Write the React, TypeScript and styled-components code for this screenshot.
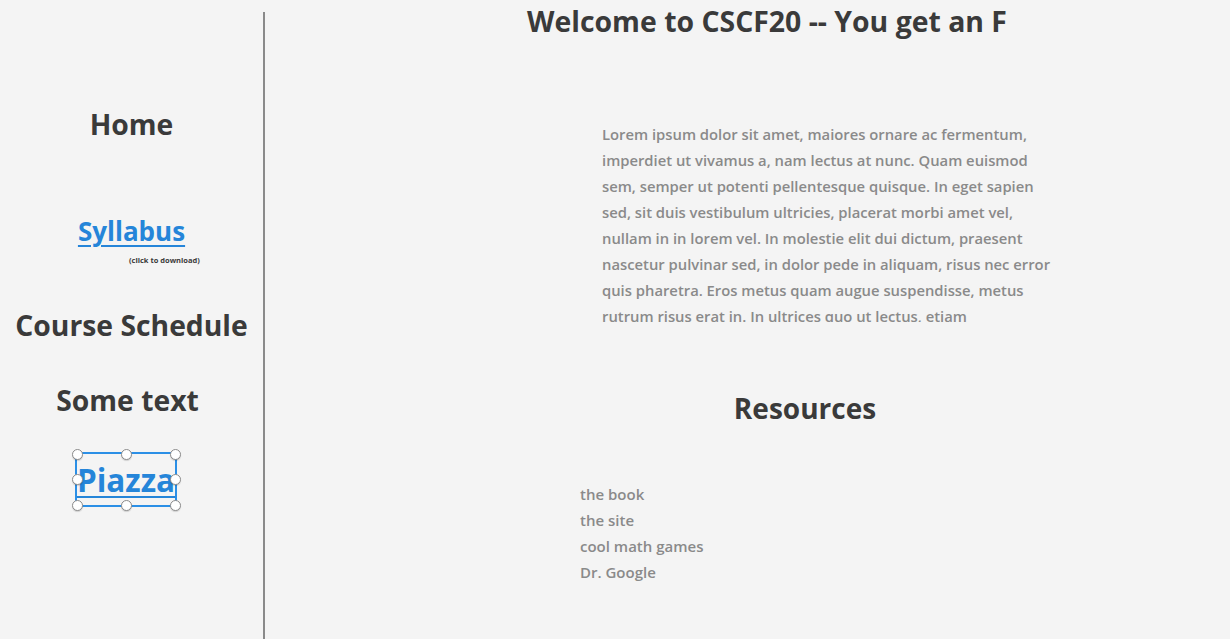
import React from "react";
import styled, { createGlobalStyle } from "styled-components";

const Global = createGlobalStyle`
  html, body { margin: 0; padding: 0; background: #f4f4f4; }
  body { font-family: "Open Sans", "Noto Sans", sans-serif; }
`;

const Page = styled.div`
  display: grid;
  grid-template-columns: 263px 2px 1fr;
  width: 1230px;
  height: 639px;
  overflow: hidden;
  background: #f4f4f4;
`;

const Sidebar = styled.nav`
  display: flex;
  flex-direction: column;
  align-items: center;
`;

const Divider = styled.div`
  margin-top: 12px;
  background: #8a8a8a;
`;

const NavItem = styled.div<{ $top: number; $shift?: number }>`
  margin-top: ${(p) => p.$top}px;
  transform: translateX(${(p) => p.$shift ?? 0}px);
  font-size: 28.3px;
  line-height: 36px;
  font-weight: 700;
  color: #3a3a3a;
  white-space: nowrap;
`;

const NavLink = styled.a<{ $top: number }>`
  margin-top: ${(p) => p.$top}px;
  font-size: 26px;
  line-height: 32px;
  font-weight: 700;
  color: #2585d9;
  text-decoration: underline;
  text-decoration-thickness: 2px;
  text-underline-offset: 4px;
`;

const Hint = styled.div`
  align-self: flex-start;
  margin-left: 129px;
  margin-top: 8px;
  font-size: 7.5px;
  font-weight: 700;
  color: #3a3a3a;
`;

const Selected = styled.div`
  position: relative;
  margin-top: 34px;
  margin-left: -11px;
  width: 98px;
  height: 51px;
  border: 2px solid #2b8fe6;
  display: flex;
  justify-content: center;
  align-items: center;
`;

const Handle = styled.span<{ $x: string; $y: string }>`
  position: absolute;
  left: ${(p) => p.$x};
  top: ${(p) => p.$y};
  width: 9px;
  height: 9px;
  margin: -5.5px 0 0 -5.5px;
  border-radius: 50%;
  background: #fff;
  border: 1px solid #8c8c8c;
  box-shadow: 0 1px 1px rgba(0, 0, 0, 0.15);
`;

const PiazzaLink = styled.a`
  font-size: 31.5px;
  line-height: 36px;
  font-weight: 700;
  color: #2585d9;
  text-decoration: underline;
  text-decoration-thickness: 2px;
  text-underline-offset: 4px;
`;

const Main = styled.main`
  display: flex;
  flex-direction: column;
`;

const Title = styled.h1`
  margin: 3px 0 0 39px;
  text-align: center;
  font-size: 28.4px;
  line-height: 36px;
  font-weight: 700;
  color: #3a3a3a;
`;

const Body = styled.div`
  margin: 82px 0 0 337px;
  height: 201px;
  overflow: hidden;
  font-size: 14.8px;
  line-height: 26px;
  font-weight: 600;
  color: #8a8a8a;
`;

const Line = styled.div`
  white-space: nowrap;
`;

const SubTitle = styled.h2`
  margin: 68px 0 0 115px;
  text-align: center;
  font-size: 28px;
  line-height: 36px;
  font-weight: 700;
  color: #3a3a3a;
`;

const List = styled.ul`
  list-style: none;
  margin: 55px 0 0 315px;
  padding: 0;
  font-size: 15px;
  line-height: 26px;
  font-weight: 600;
  color: #8a8a8a;
`;

const lines = [
  "Lorem ipsum dolor sit amet, maiores ornare ac fermentum,",
  "imperdiet ut vivamus a, nam lectus at nunc. Quam euismod",
  "sem, semper ut potenti pellentesque quisque. In eget sapien",
  "sed, sit duis vestibulum ultricies, placerat morbi amet vel,",
  "nullam in in lorem vel. In molestie elit dui dictum, praesent",
  "nascetur pulvinar sed, in dolor pede in aliquam, risus nec error",
  "quis pharetra. Eros metus quam augue suspendisse, metus",
  "rutrum risus erat in.  In ultrices quo ut lectus, etiam",
];

const handles: [string, string][] = [
  ["0%", "0%"], ["50%", "0%"], ["100%", "0%"],
  ["0%", "50%"], ["100%", "50%"],
  ["0%", "100%"], ["50%", "100%"], ["100%", "100%"],
];

export default function App() {
  return (
    <>
      <Global />
      <Page>
        <Sidebar>
          <NavItem $top={106}>Home</NavItem>
          <NavLink $top={73} href="#">Syllabus</NavLink>
          <Hint>(click to download)</Hint>
          <NavItem $top={42}>Course Schedule</NavItem>
          <NavItem $top={39} $shift={-4}>Some text</NavItem>
          <Selected>
            {handles.map(([x, y], i) => (
              <Handle key={i} $x={x} $y={y} />
            ))}
            <PiazzaLink href="#">Piazza</PiazzaLink>
          </Selected>
        </Sidebar>
        <Divider />
        <Main>
          <Title>Welcome to CSCF20 -- You get an F</Title>
          <Body>
            {lines.map((l, i) => (
              <Line key={i}>{l}</Line>
            ))}
          </Body>
          <SubTitle>Resources</SubTitle>
          <List>
            <li>the book</li>
            <li>the site</li>
            <li>cool math games</li>
            <li>Dr. Google</li>
          </List>
        </Main>
      </Page>
    </>
  );
}
